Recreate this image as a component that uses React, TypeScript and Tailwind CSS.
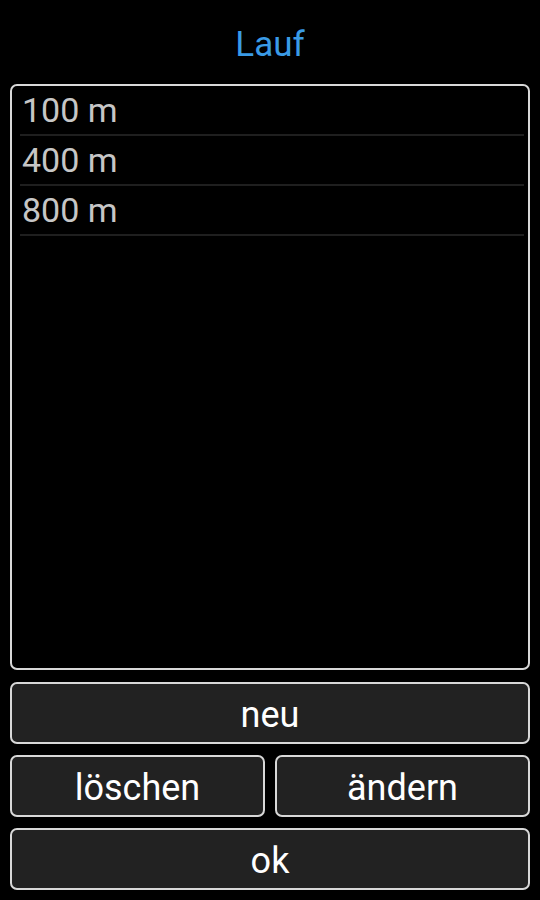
import React from "react";

const font = { fontFamily: "Roboto, 'Noto Sans', sans-serif" };

function Btn({ label, className = "" }: { label: string; className?: string }) {
  return (
    <button
      className={`h-[62px] rounded-[7px] border-2 border-[#d8d8d8] bg-[#222222] text-[36px] leading-none text-white flex items-center justify-center pt-[3px] ${className}`}
    >
      {label}
    </button>
  );
}

export default function App() {
  const items = ["100 m", "400 m", "800 m"];
  return (
    <div className="w-[540px] h-[900px] bg-black flex flex-col px-[10px]" style={font}>
      <div className="h-[84px] flex items-center justify-center shrink-0 pt-[4px]">
        <span className="text-[35px] text-[#3a9be6] leading-none">Lauf</span>
      </div>
      <div className="h-[586px] rounded-[7px] border-2 border-[#d8d8d8] bg-black pl-[8px] pr-[4px] shrink-0">
        {items.map((t) => (
          <div
            key={t}
            className="h-[50px] border-b-2 border-[#1f1f1f] flex items-center text-[34px] text-[#c6c6c6] leading-none pl-[2px]"
          >
            {t}
          </div>
        ))}
      </div>
      <div className="mt-[12px] flex flex-col gap-[11px]">
        <Btn label="neu" />
        <div className="flex gap-[10px]">
          <Btn label="löschen" className="flex-1" />
          <Btn label="ändern" className="flex-1" />
        </div>
        <Btn label="ok" />
      </div>
    </div>
  );
}
